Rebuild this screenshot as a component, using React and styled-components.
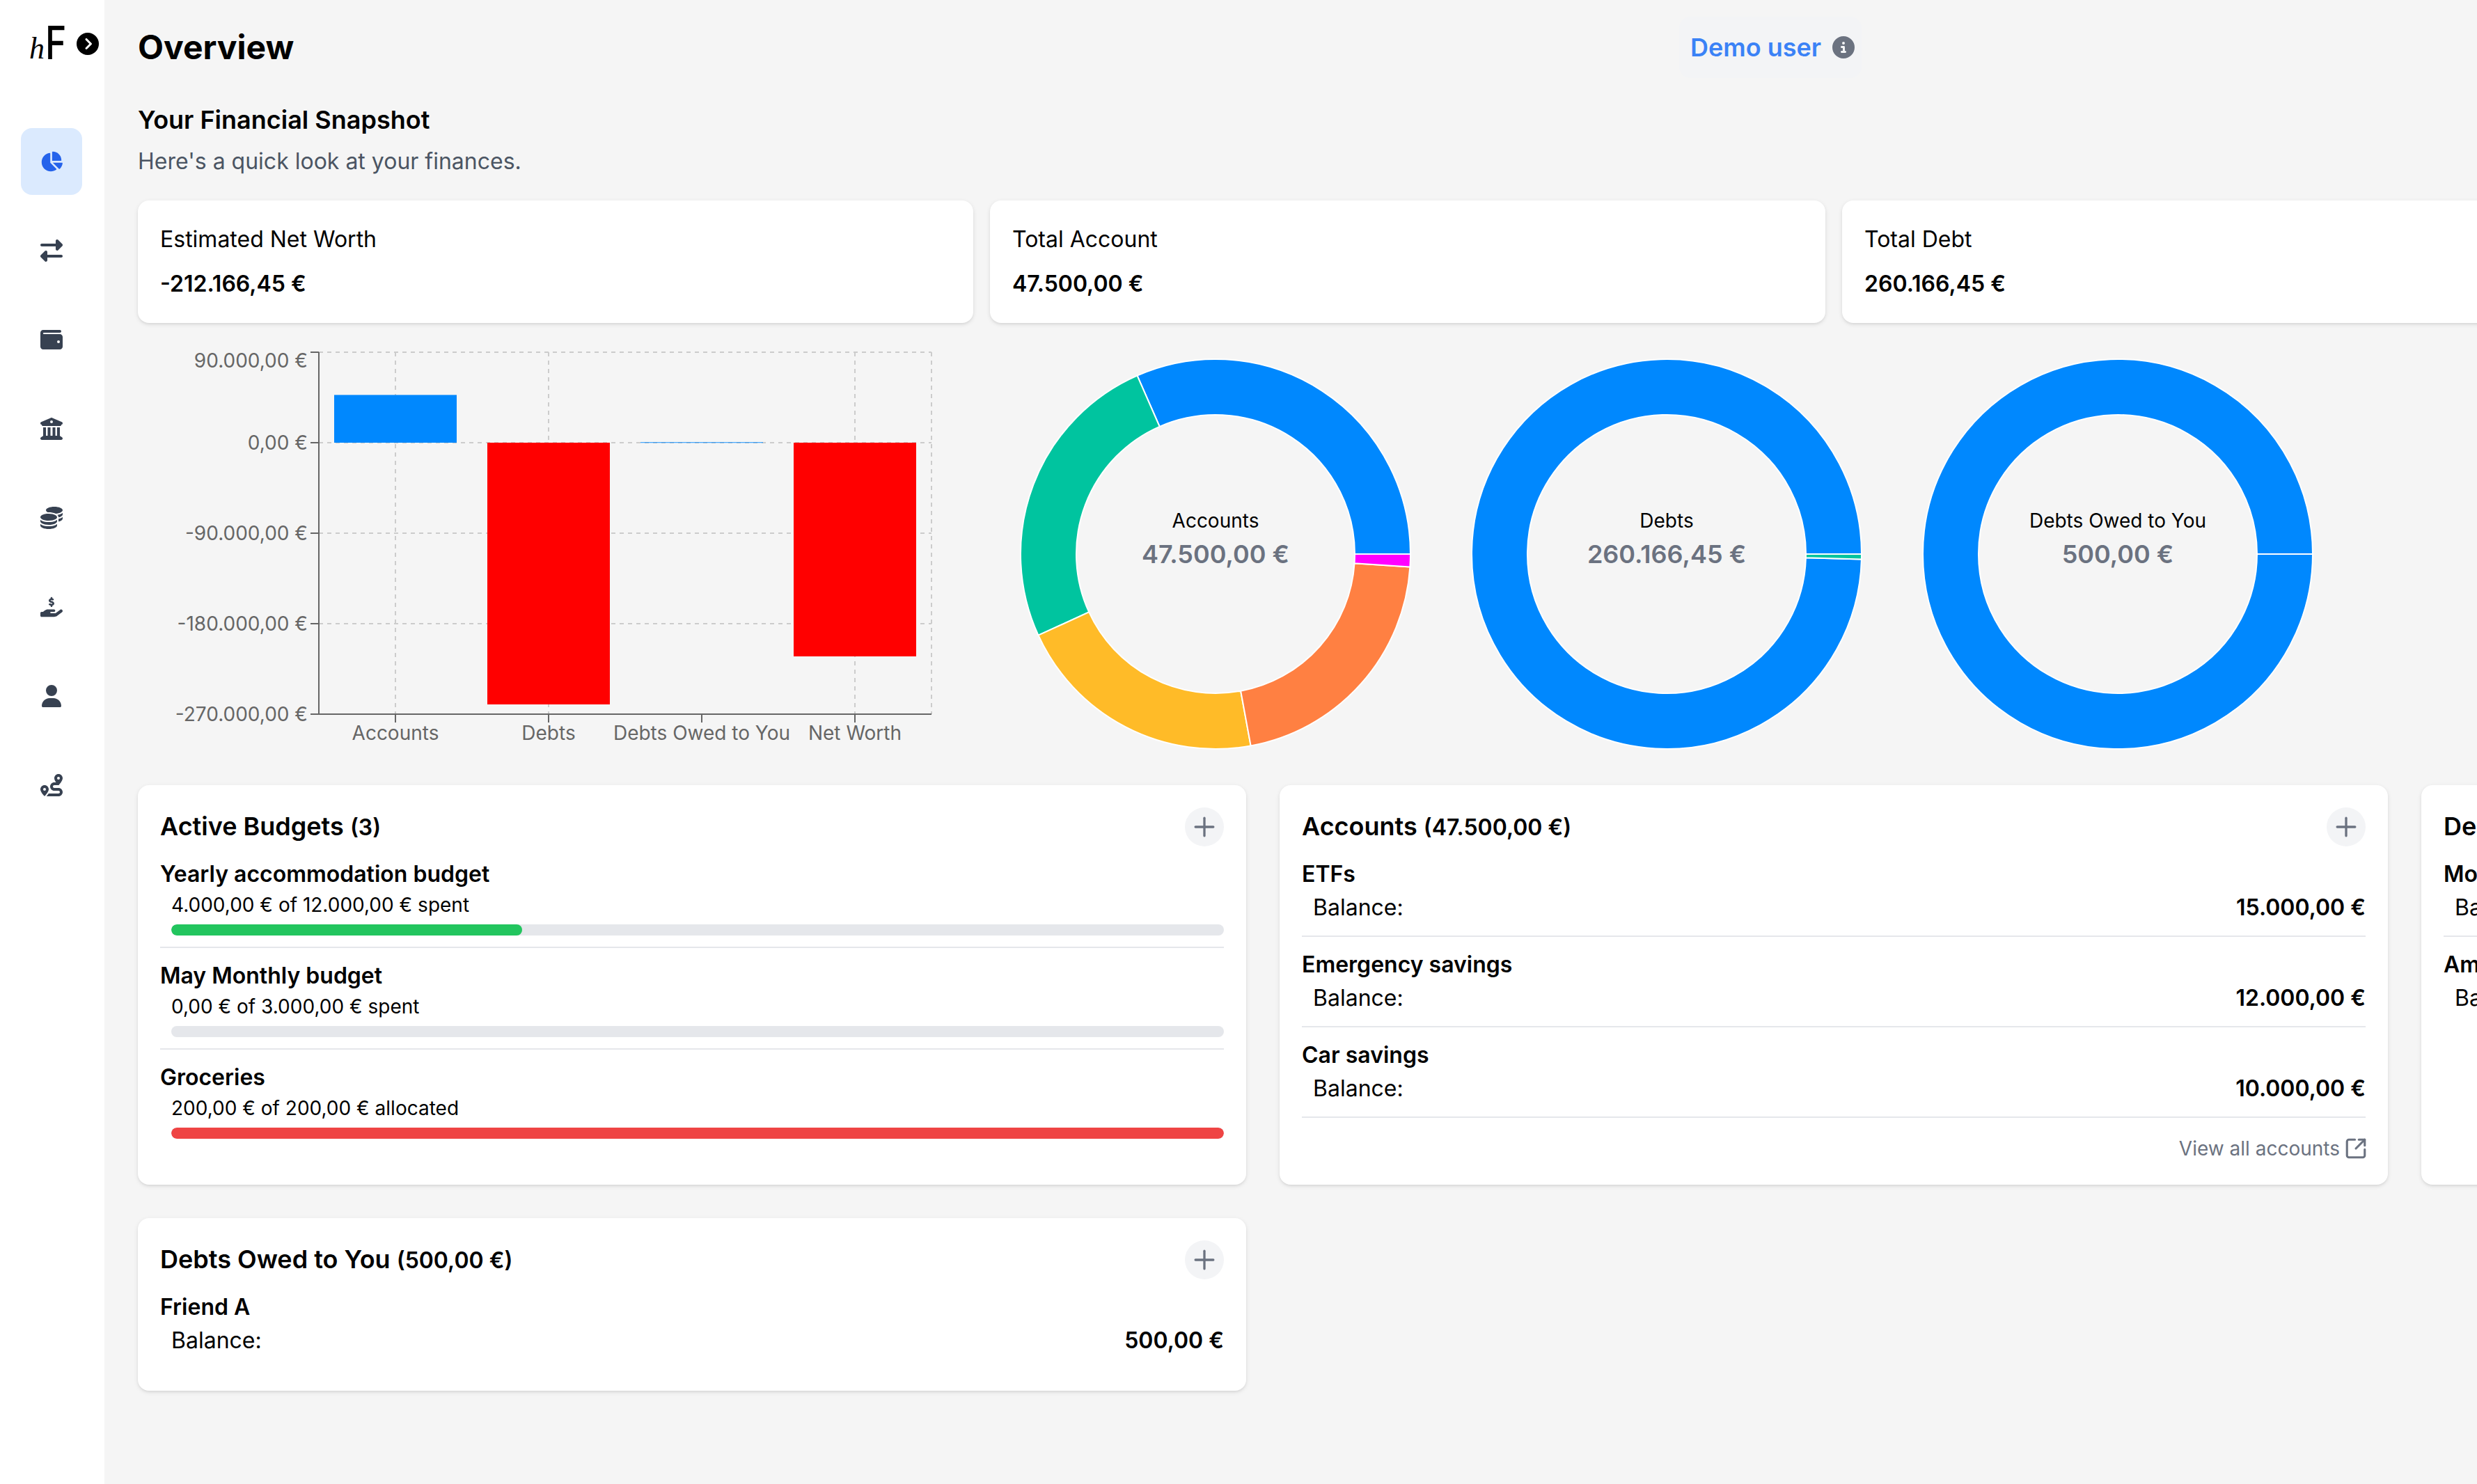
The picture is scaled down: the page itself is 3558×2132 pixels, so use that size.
import React from "react";
import styled, { createGlobalStyle } from "styled-components";
import {
  FaChartPie, FaRightLeft, FaWallet, FaBuildingColumns, FaCoins,
  FaHandHoldingDollar, FaUser, FaRoute, FaCircleChevronRight, FaCircleInfo,
} from "react-icons/fa6";
import { Plus, SquareArrowOutUpRight } from "lucide-react";

const Global = createGlobalStyle`
  html, body { margin: 0; padding: 0; width: 3558px; height: 2132px; overflow: hidden; background: #f5f5f5; }
  * { box-sizing: border-box; }
  body { font-family: Inter, "Liberation Sans", sans-serif; color: #000; }
`;

const Shell = styled.div`display: flex; width: 3558px; height: 2132px; overflow: hidden;`;
const Sidebar = styled.aside`flex: 0 0 150px; background: #fff; padding-top: 30px; display: flex; flex-direction: column;`;
const LogoRow = styled.div`display: flex; align-items: flex-end; height: 64px; margin-left: 42px; position: relative;`;
const LogoH = styled.span`
  font-family: "Liberation Serif", serif; font-style: italic; font-size: 44px; line-height: 44px;
  width: 23px; margin-bottom: 2px; font-weight: 400;
`;
const LogoF = styled.span`
  font-family: Inter, sans-serif; font-weight: 500; font-size: 66px; line-height: 70px; width: 30px;
  transform: scaleX(.78); transform-origin: left bottom; margin-bottom: -2px;
`;
const Toggle = styled.span`display: flex; margin-left: 15px; align-self: flex-start; margin-top: 17px; font-size: 32px; color: #000;`;
const Nav = styled.nav`display: flex; flex-direction: column; gap: 32px; margin: 90px 0 0 30px;`;
const NavItem = styled.a`
  width: 88px; height: 96px; display: flex; align-items: center; justify-content: center; border-radius: 16px;
  color: ${p => (p.$active ? "#2563eb" : "#374151")}; background: ${p => (p.$active ? "#dbeafe" : "transparent")};
  svg { height: 32px; width: auto; }
`;

const Main = styled.main`flex: 1; min-width: 0; padding: 24px 0 0 48px; overflow: hidden;`;
const Header = styled.header`display: grid; grid-template-columns: 2214px auto; align-items: center; justify-content: start; height: 88px; margin-bottom: 32px;`;
const PageTitle = styled.h1`margin: 0; font-size: 48px; line-height: 64px; font-weight: 700;`;
const DemoBox = styled.div`
  display: flex; align-items: center; gap: 16px; height: 88px; padding: 0 10px 0 16px; border-radius: 16px; background: #f3f4f6;
  color: #3b82f6; font-size: 36px; font-weight: 600;
`;
const InfoIcon = styled.span`display: flex; color: #6b7280; font-size: 32px;`;
const SectionTitle = styled.h2`margin: 0; font-size: 36px; line-height: 56px; font-weight: 600;`;
const SectionSub = styled.p`margin: 8px 0 32px; font-size: 32px; line-height: 48px; color: #4b5563;`;

const StatRow = styled.div`display: grid; grid-template-columns: repeat(3, 1200px); gap: 24px; margin-bottom: 32px;`;
const Card = styled.section`
  background: #fff; border-radius: 16px; padding: 32px;
  box-shadow: 0 2px 6px 0 rgba(0,0,0,.1), 0 2px 4px -2px rgba(0,0,0,.1);
`;
const StatLabel = styled.div`font-size: 32px; line-height: 48px;`;
const StatValue = styled.div`font-size: 32px; line-height: 48px; font-weight: 600; margin-top: 16px;`;

const ChartRow = styled.div`display: flex; height: 600px; margin-bottom: 32px;`;
const BarSvg = styled.svg`flex: 0 0 1200px; height: 600px; margin-right: 24px; display: block;`;
const DonutSvg = styled.svg`flex: 0 0 648px; height: 600px; display: block;`;
const Tick = styled.text`font-family: Inter, sans-serif; font-size: 28px; fill: #666;`;
const DonutLabel = styled.text`font-family: Inter, sans-serif; font-size: 28px; fill: #000; text-anchor: middle; dominant-baseline: central;`;
const DonutValue = styled.text`font-family: Inter, sans-serif; font-size: 36px; font-weight: 600; fill: #6b7280; text-anchor: middle; dominant-baseline: central;`;

const PanelGrid = styled.div`display: grid; grid-template-columns: repeat(3, 1592px); gap: 48px;`;
const PanelHead = styled.div`display: flex; align-items: center; justify-content: space-between; height: 56px; margin-bottom: 16px;`;
const PanelTitle = styled.h3`margin: 0; font-size: 36px; line-height: 56px; font-weight: 600;`;
const PanelCount = styled.span`font-size: 32px; font-weight: 600;`;
const AddButton = styled.button`
  width: 56px; height: 56px; border: 0; border-radius: 50%; padding: 0; background: #f3f4f6; color: #6b7280;
  display: flex; align-items: center; justify-content: center;
`;
const Item = styled.div`
  padding-bottom: 16px;
  ${p => (p.$divider ? "border-bottom: 2px solid #e5e7eb; margin-bottom: 16px;" : "")}
`;
const ItemName = styled.div`font-size: 32px; line-height: 48px; font-weight: 600;`;
const ItemBody = styled.div`padding-left: 16px;`;
const BudgetText = styled.div`font-size: 28px; line-height: 40px;`;
const Track = styled.div`height: 16px; margin-top: 8px; border-radius: 8px; background: #e5e7eb; overflow: hidden;`;
const Fill = styled.div`height: 100%; border-radius: 8px; background: ${p => p.$color};`;
const BalanceRow = styled.div`display: flex; justify-content: space-between; font-size: 32px; line-height: 48px;`;
const Amount = styled.span`font-weight: 600;`;
const ViewAll = styled.a`
  display: flex; align-items: center; justify-content: flex-end; gap: 6px; margin: 24px -3px 0 0;
  font-size: 28px; line-height: 40px; color: #6b7280;
`;

const toPt = (cx, cy, r, deg) => {
  const a = (deg * Math.PI) / 180;
  return [cx + r * Math.cos(a), cy - r * Math.sin(a)];
};
const arcPath = (cx, cy, R, r, a0, a1) => {
  const large = a1 - a0 > 180 ? 1 : 0;
  const [x0, y0] = toPt(cx, cy, R, a0);
  const [x1, y1] = toPt(cx, cy, R, a1);
  const [x2, y2] = toPt(cx, cy, r, a1);
  const [x3, y3] = toPt(cx, cy, r, a0);
  return `M${x0} ${y0}A${R} ${R} 0 ${large} 0 ${x1} ${y1}L${x2} ${y2}A${r} ${r} 0 ${large} 1 ${x3} ${y3}Z`;
};

const Donut = ({ label, value, slices }) => {
  const total = slices.reduce((s, x) => s + x.v, 0);
  let a = 0;
  const cap = 359.99;
  return (
    <DonutSvg viewBox="0 0 648 600">
      {slices.map((s, i) => {
        const a0 = a;
        a += (s.v / total) * 360;
        return <path key={i} d={arcPath(324, 300, 280, 200, a0, Math.min(a, cap))} fill={s.c} stroke="#fff" strokeWidth="2" />;
      })}
      <DonutLabel x="324" y="252">{label}</DonutLabel>
      <DonutValue x="324" y="300">{value}</DonutValue>
    </DonutSvg>
  );
};

const BarChart = () => {
  const gy = [10, 140, 270, 400, 530];
  const labels = [["90.000,00 €", 22], ["0,00 €", 140], ["-90.000,00 €", 270], ["-180.000,00 €", 400], ["-270.000,00 €", 530]];
  const gx = [370, 590, 1030, 1140];
  const cats = [["Accounts", 370], ["Debts", 590], ["Debts Owed to You", 810], ["Net Worth", 1030]];
  const bars = [[282, 71.4, 68.6, "#0088FE"], [502, 140, 376, "#FF0000"], [722, 139.3, 0.9, "#0088FE"], [942, 140, 307, "#FF0000"]];
  return (
    <BarSvg viewBox="0 0 1200 600">
      {gy.map(y => <line key={y} x1="260" x2="1140" y1={y} y2={y} stroke="#ccc" strokeWidth="2" strokeDasharray="6 6" />)}
      {gx.map(x => <line key={x} x1={x} x2={x} y1="10" y2="530" stroke="#ccc" strokeWidth="2" strokeDasharray="6 6" />)}
      {bars.map(([x, y, h, c]) => <rect key={x} x={x} y={y} width="176" height={h} fill={c} />)}
      <line x1="260" x2="260" y1="10" y2="530" stroke="#666" strokeWidth="2" />
      <line x1="260" x2="1140" y1="530" y2="530" stroke="#666" strokeWidth="2" />
      {gy.map(y => <line key={y} x1="248" x2="260" y1={y} y2={y} stroke="#666" strokeWidth="2" />)}
      {cats.map(([, x]) => <line key={x} x1={x} x2={x} y1="530" y2="542" stroke="#666" strokeWidth="2" />)}
      {labels.map(([t, y]) => <Tick key={t} x="244" y={y + 10} textAnchor="end">{t}</Tick>)}
      {cats.map(([t, x]) => <Tick key={t} x={x} y="567" textAnchor="middle">{t}</Tick>)}
    </BarSvg>
  );
};

const AddBtn = () => <AddButton><Plus size={44} strokeWidth={1.8} /></AddButton>;
const Panel = ({ title, count, children }) => (
  <Card>
    <PanelHead>
      <PanelTitle>{title} <PanelCount>{count}</PanelCount></PanelTitle>
      <AddBtn />
    </PanelHead>
    {children}
  </Card>
);
const Budget = ({ name, text, pct, color, divider }) => (
  <Item $divider={divider}>
    <ItemName>{name}</ItemName>
    <ItemBody>
      <BudgetText>{text}</BudgetText>
      <Track><Fill $color={color} style={{ width: `${pct}%` }} /></Track>
    </ItemBody>
  </Item>
);
const Balance = ({ name, amount, divider }) => (
  <Item $divider={divider}>
    <ItemName>{name}</ItemName>
    <ItemBody>
      <BalanceRow><span>Balance:</span><Amount>{amount}</Amount></BalanceRow>
    </ItemBody>
  </Item>
);

const navIcons = [FaChartPie, FaRightLeft, FaWallet, FaBuildingColumns, FaCoins, FaHandHoldingDollar, FaUser, FaRoute];
const stats = [
  ["Estimated Net Worth", "-212.166,45 €"],
  ["Total Account", "47.500,00 €"],
  ["Total Debt", "260.166,45 €"],
];

export default function App() {
  return (
    <Shell>
      <Global />
      <Sidebar>
        <LogoRow>
          <LogoH>h</LogoH>
          <LogoF>F</LogoF>
          <Toggle><FaCircleChevronRight /></Toggle>
        </LogoRow>
        <Nav>
          {navIcons.map((I, i) => <NavItem key={i} $active={i === 0}><I /></NavItem>)}
        </Nav>
      </Sidebar>
      <Main>
        <Header>
          <PageTitle>Overview</PageTitle>
          <DemoBox>Demo user <InfoIcon><FaCircleInfo /></InfoIcon></DemoBox>
        </Header>
        <SectionTitle>Your Financial Snapshot</SectionTitle>
        <SectionSub>Here's a quick look at your finances.</SectionSub>
        <StatRow>
          {stats.map(([l, v]) => (
            <Card key={l}><StatLabel>{l}</StatLabel><StatValue>{v}</StatValue></Card>
          ))}
        </StatRow>
        <ChartRow>
          <BarChart />
          <Donut label="Accounts" value="47.500,00 €" slices={[
            { v: 15000, c: "#0088FE" }, { v: 12000, c: "#00C49F" }, { v: 10000, c: "#FFBB28" },
            { v: 10000, c: "#FF8042" }, { v: 500, c: "#FF00FF" },
          ]} />
          <Donut label="Debts" value="260.166,45 €" slices={[
            { v: 259066.45, c: "#0088FE" }, { v: 1100, c: "#00C49F" },
          ]} />
          <Donut label="Debts Owed to You" value="500,00 €" slices={[{ v: 500, c: "#0088FE" }]} />
        </ChartRow>
        <PanelGrid>
          <Panel title="Active Budgets" count="(3)">
            <Budget name="Yearly accommodation budget" text="4.000,00 € of 12.000,00 € spent" pct={33.33} color="#22c55e" divider />
            <Budget name="May Monthly budget" text="0,00 € of 3.000,00 € spent" pct={0} color="#22c55e" divider />
            <Budget name="Groceries" text="200,00 € of 200,00 € allocated" pct={100} color="#ef4444" />
          </Panel>
          <Panel title="Accounts" count="(47.500,00 €)">
            <Balance name="ETFs" amount="15.000,00 €" divider />
            <Balance name="Emergency savings" amount="12.000,00 €" divider />
            <Balance name="Car savings" amount="10.000,00 €" divider />
            <ViewAll>View all accounts <SquareArrowOutUpRight size={34} strokeWidth={2.2} /></ViewAll>
          </Panel>
          <Panel title="Debts" count="(260.166,45 €)">
            <Balance name="Mortgage" amount="259.066,45 €" divider />
            <Balance name="Amex" amount="1.100,00 €" />
          </Panel>
          <Panel title="Debts Owed to You" count="(500,00 €)">
            <Balance name="Friend A" amount="500,00 €" />
          </Panel>
        </PanelGrid>
      </Main>
    </Shell>
  );
}
